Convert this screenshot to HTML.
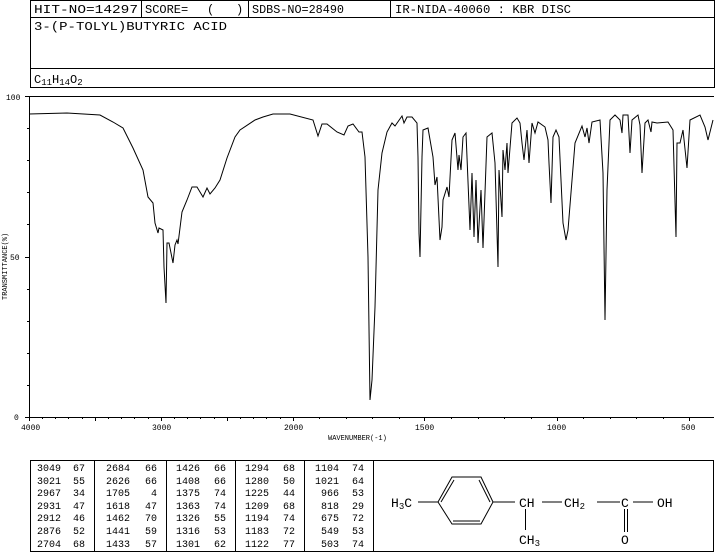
<!DOCTYPE html>
<html><head><meta charset="utf-8"><style>
html,body{margin:0;padding:0;background:#fff;width:715px;height:553px;overflow:hidden}
svg{display:block}
text{font-family:"Liberation Mono","DejaVu Sans Mono",monospace;fill:#000;white-space:pre}
</style></head><body>
<svg width="715" height="553" viewBox="0 0 715 553" xmlns="http://www.w3.org/2000/svg">
<g fill="none" stroke="#000" stroke-width="1">
<rect x="30.5" y="0.5" width="684" height="87"/>
<line x1="30" y1="17.5" x2="715" y2="17.5"/>
<line x1="30" y1="68.5" x2="715" y2="68.5"/>
<line x1="141.5" y1="0" x2="141.5" y2="17"/>
<line x1="248.5" y1="0" x2="248.5" y2="17"/>
<line x1="390.5" y1="0" x2="390.5" y2="17"/>
</g>
<g font-size="12">
<text x="34" y="13" textLength="104" lengthAdjust="spacingAndGlyphs">HIT-NO=14297</text>
<text x="145" y="13">SCORE=</text><text x="207" y="13">(</text><text x="236" y="13">)</text>
<text x="252" y="13" textLength="92" lengthAdjust="spacingAndGlyphs">SDBS-NO=28490</text>
<text x="395" y="13" textLength="176" lengthAdjust="spacingAndGlyphs">IR-NIDA-40060 : KBR DISC</text>
<text x="34" y="30" textLength="193" lengthAdjust="spacingAndGlyphs">3-(P-TOLYL)BUTYRIC ACID</text>
<text x="34" y="83">C<tspan font-size="9" dy="2">11</tspan><tspan dy="-2">H</tspan><tspan font-size="9" dy="2">14</tspan><tspan dy="-2">O</tspan><tspan font-size="9" dy="2">2</tspan></text>
</g>
<g fill="none" stroke="#000" stroke-width="1">
<polyline points="714,96.5 29.5,96.5 29.5,417.5 714,417.5"/>
<path d="M25,96.5h5M25,257.5h5M25,417.5h5M27,128.5h3M27,160.5h3M27,192.5h3M27,224.5h3M27,289.5h3M27,321.5h3M27,353.5h3M27,385.5h3"/>
<path d="M29.5,417v4M42.5,417v2M55.5,417v2M68.5,417v2M82.5,417v2M95.5,417v4M108.5,417v2M121.5,417v2M134.5,417v2M148.5,417v2M161.5,417v4M174.5,417v2M187.5,417v2M200.5,417v2M214.5,417v2M227.5,417v4M240.5,417v2M253.5,417v2M266.5,417v2M280.5,417v2M293.5,417v4M319.5,417v2M346.5,417v2M372.5,417v2M399.5,417v2M424.5,417v4M451.5,417v2M478.5,417v2M504.5,417v2M531.5,417v2M557.5,417v4M583.5,417v2M610.5,417v2M636.5,417v2M663.5,417v2M689.5,417v4"/>
</g>
<g font-size="8">
<text x="6" y="100">100</text>
<text x="10" y="260">50</text>
<text x="14" y="420">0</text>
<text x="21" y="430">4000</text>
<text x="152" y="430">3000</text>
<text x="284" y="430">2000</text>
<text x="415" y="430">1500</text>
<text x="547" y="430">1000</text>
<text x="681" y="430">500</text>
<text x="328" y="440" font-size="7">WAVENUMBER(-1)</text>
<text transform="translate(7,300) rotate(-90)" font-size="7">TRANSMITTANCE(%)</text>
</g>
<polyline fill="none" stroke="#000" stroke-width="1" points="29,114 67,113 100,115 113,122 123,128 133,148 143,170 148,197 153,203 155,223 158,233 159,228 163,230 164,267 166,303 167,243 169,243 173,263 175,245 177,240 178,244 182,212 187,200 192,187 197,187 200,192 203,197 207,188 210,194 215,188 220,180 227,158 235,137 240,130 255,120 263,117 273,114 290,114 313,120 318,136 322,124 327,124 337,132 344,135 348,126 353,124 359,132 362,132 365,157 368,257 370,400 372,380 375,307 378,190 382,153 387,132 392,123 395,126 402,116 404,123 407,117 412,117 417,123 418,157 419,233 420,257 422,157 423,130 428,128 433,157 435,185 437,177 440,240 442,227 443,200 447,187 449,197 452,140 455,133 458,170 459,155 461,170 463,137 466,133 470,230 472,173 474,237 476,180 478,243 481,190 483,248 487,137 492,133 495,163 498,267 499,170 502,217 503,150 505,170 507,143 508,173 512,123 517,118 520,123 522,143 524,160 527,130 529,163 532,123 535,133 538,122 545,127 548,140 549,163 551,203 553,137 556,130 559,137 563,223 566,240 568,230 575,143 582,126 585,137 587,128 589,143 592,122 600,120 603,173 605,320 607,190 610,120 615,115 620,120 622,133 623,115 628,115 630,153 632,120 638,115 640,125 642,173 645,123 648,120 651,132 652,122 657,123 668,122 673,130 676,237 677,143 680,143 683,130 687,168 690,120 700,115 705,127 708,140 713,120"/>
<g fill="none" stroke="#000" stroke-width="1">
<rect x="30.5" y="460.5" width="683" height="91"/>
<line x1="94.5" y1="460" x2="94.5" y2="552"/>
<line x1="166.5" y1="460" x2="166.5" y2="552"/>
<line x1="235.5" y1="460" x2="235.5" y2="552"/>
<line x1="304.5" y1="460" x2="304.5" y2="552"/>
<line x1="373.5" y1="460" x2="373.5" y2="552"/>
</g>
<g font-size="10" text-anchor="end">
<text x="61" y="471">3049</text><text x="61" y="484">3021</text><text x="61" y="496">2967</text><text x="61" y="509">2931</text><text x="61" y="521">2912</text><text x="61" y="534">2876</text><text x="61" y="547">2704</text>
<text x="85" y="471">67</text><text x="85" y="484">55</text><text x="85" y="496">34</text><text x="85" y="509">47</text><text x="85" y="521">46</text><text x="85" y="534">52</text><text x="85" y="547">68</text>
<text x="130" y="471">2684</text><text x="130" y="484">2626</text><text x="130" y="496">1705</text><text x="130" y="509">1618</text><text x="130" y="521">1462</text><text x="130" y="534">1441</text><text x="130" y="547">1433</text>
<text x="157" y="471">66</text><text x="157" y="484">66</text><text x="157" y="496">4</text><text x="157" y="509">47</text><text x="157" y="521">70</text><text x="157" y="534">59</text><text x="157" y="547">57</text>
<text x="200" y="471">1426</text><text x="200" y="484">1408</text><text x="200" y="496">1375</text><text x="200" y="509">1363</text><text x="200" y="521">1326</text><text x="200" y="534">1316</text><text x="200" y="547">1301</text>
<text x="226" y="471">66</text><text x="226" y="484">66</text><text x="226" y="496">74</text><text x="226" y="509">74</text><text x="226" y="521">55</text><text x="226" y="534">53</text><text x="226" y="547">62</text>
<text x="269" y="471">1294</text><text x="269" y="484">1280</text><text x="269" y="496">1225</text><text x="269" y="509">1209</text><text x="269" y="521">1194</text><text x="269" y="534">1183</text><text x="269" y="547">1122</text>
<text x="295" y="471">68</text><text x="295" y="484">50</text><text x="295" y="496">44</text><text x="295" y="509">68</text><text x="295" y="521">74</text><text x="295" y="534">72</text><text x="295" y="547">77</text>
<text x="339" y="471">1104</text><text x="339" y="484">1021</text><text x="339" y="496">966</text><text x="339" y="509">818</text><text x="339" y="521">675</text><text x="339" y="534">549</text><text x="339" y="547">503</text>
<text x="364" y="471">74</text><text x="364" y="484">64</text><text x="364" y="496">53</text><text x="364" y="509">29</text><text x="364" y="521">72</text><text x="364" y="534">53</text><text x="364" y="547">74</text>
</g>
<g fill="none" stroke="#000" stroke-width="1">
<polygon points="438,502 452,477 481,477 493,502 481,524 452,524"/>
<line x1="441" y1="502" x2="454" y2="480"/>
<line x1="479" y1="480" x2="490" y2="502"/>
<line x1="453" y1="521" x2="480" y2="521"/>
<line x1="418" y1="502" x2="438" y2="502"/>
<line x1="493" y1="502" x2="515" y2="502"/>
<line x1="542" y1="502" x2="562" y2="502"/>
<line x1="597" y1="502" x2="620" y2="502"/>
<line x1="633" y1="502" x2="653" y2="502"/>
<line x1="525.5" y1="509" x2="525.5" y2="530"/>
<line x1="624.5" y1="509" x2="624.5" y2="532"/>
<line x1="627.5" y1="509" x2="627.5" y2="532"/>
</g>
<g font-size="13">
<text x="391" y="507">H<tspan font-size="9" dy="2">3</tspan><tspan dy="-2">C</tspan></text>
<text x="519" y="507">CH</text>
<text x="564" y="507">CH<tspan font-size="9" dy="2">2</tspan></text>
<text x="621" y="507">C</text>
<text x="657" y="507">OH</text>
<text x="519" y="544">CH<tspan font-size="9" dy="2">3</tspan></text>
<text x="621" y="544">O</text>
</g>
</svg>
</body></html>
